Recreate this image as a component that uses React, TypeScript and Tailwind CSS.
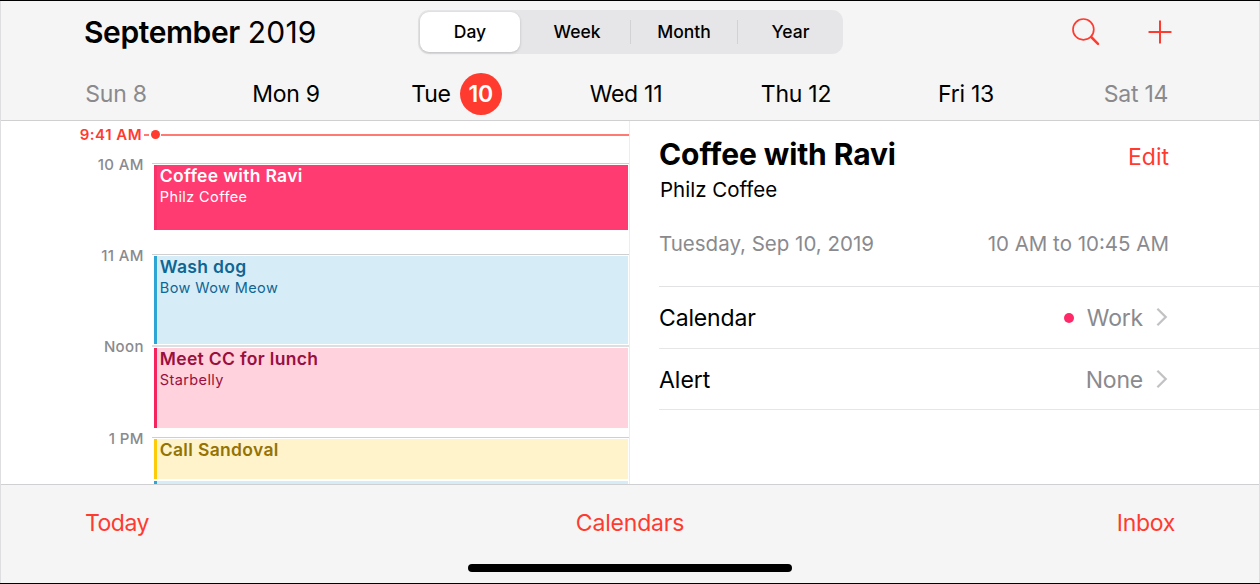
import React from "react";

type Tone = "selected" | "blue" | "pink" | "yellow";

const tones: Record<Tone, string> = {
  selected: "border-[#f8326a] bg-[#ff3b72] text-white",
  blue: "border-[#2fa5d6] bg-[#d6edf7] text-[#0f6593]",
  pink: "border-[#f5245f] bg-[#ffd2dd] text-[#990f3f]",
  yellow: "border-[#fdcb09] bg-[#fef3cb] text-[#947306]",
};

function EventBlock({ tone, title, place, className }: {
  tone: Tone; title?: string; place?: string; className: string;
}) {
  return (
    <div className={`ml-[2px] w-[474px] shrink-0 overflow-hidden border-l-[3px] pl-[3px] ${tones[tone]} ${className}`}>
      {title && <div className="text-[17.5px] leading-[21px] font-semibold tracking-[0.33px] whitespace-nowrap">{title}</div>}
      {place && <div className="text-[14.5px] leading-[21px] tracking-[0.4px] whitespace-nowrap">{place}</div>}
    </div>
  );
}

function Hour({ label, className, line = "border-t border-[#cfcfd1]", children }: {
  label: string; className: string; line?: string; children: React.ReactNode;
}) {
  return (
    <div className={`flex shrink-0 ${className}`}>
      <div className="-mt-[8px] h-5 w-[143px] text-right text-[15px] leading-5 font-medium tracking-[0.35px] text-[#8a8a8e]">{label}</div>
      <div className={`ml-[8px] flex w-[478px] flex-col ${line}`}>{children}</div>
    </div>
  );
}

function Chevron() {
  return (
    <svg width="12" height="20" viewBox="0 0 12 20" fill="none" stroke="#c2c2c5" strokeWidth="2.3" className="-mt-[3px] ml-[13px]">
      <path d="M1.4 1.8 9.7 10 1.4 18.2" />
    </svg>
  );
}

const days = [
  { text: "Sun 8", cls: "text-[#8a8a8e]" },
  { text: "Mon 9", cls: "text-black" },
  { text: "Tue", badge: "10", cls: "text-black" },
  { text: "Wed 11", cls: "text-black" },
  { text: "Thu 12", cls: "text-black" },
  { text: "Fri 13", cls: "text-black" },
  { text: "Sat 14", cls: "text-[#8a8a8e]" },
];

export default function App() {
  return (
    <div className="flex h-[584px] w-[1260px] flex-col overflow-hidden border-t border-b border-black bg-white font-['Inter','Liberation_Sans',sans-serif] text-black">
      <div className="flex min-h-0 flex-1 flex-col border-x border-[#dedee0]">
        <header className="flex h-[120px] shrink-0 flex-col border-b border-[#d0d0d2] bg-[#f5f5f5]">
          <div className="flex h-[64px] shrink-0 items-center pl-[83px]">
            <h1 className="-mt-[2px] w-[334px] text-[30px] leading-9 tracking-[-0.4px] whitespace-nowrap">
              <span className="font-semibold">September</span> <span className="tracking-[0.2px]">2019</span>
            </h1>
            <div className="-mt-[2px] flex h-[44px] w-[425px] items-center rounded-[11px] bg-[#e6e6e8] p-[2px] text-[17.5px] font-medium">
              <div className="flex h-10 w-[100px] items-center justify-center rounded-[9px] bg-white pt-px shadow-[0_1px_3px_rgba(0,0,0,0.18)]">Day</div>
              <div className="w-[110px] pt-px pl-1 text-center">Week</div>
              <div className="flex h-6 w-[108px] items-center justify-center border-x border-[#d2d2d5] pt-px">Month</div>
              <div className="w-[103px] pt-px pl-0.5 text-center">Year</div>
            </div>
            <svg width="32" height="32" viewBox="0 0 32 32" fill="none" stroke="#ff3b30" strokeLinecap="round" className="-mt-[3px] ml-[228px]">
              <circle cx="12.4" cy="13.4" r="10.4" strokeWidth="1.7" />
              <path d="m20.2 21 6.8 6.8" strokeWidth="2.5" />
            </svg>
            <svg width="24" height="24" viewBox="0 0 24 24" fill="none" stroke="#ff3b30" strokeLinecap="round" strokeWidth="2" className="-mt-[2px] ml-[45px]">
              <path d="M12 1.3v21.4M1.3 12h21.4" />
            </svg>
          </div>
          <div className="ml-[30px] grid h-[55px] w-[1190px] grid-cols-7 pt-[3px] text-[23px]">
            {days.map((d) => (
              <div key={d.text} className={`flex items-center justify-center tracking-[-0.25px] ${d.cls}`}>
                {d.text}
                {d.badge && (
                  <span className="-mr-px ml-[9px] flex size-[42px] shrink-0 items-center justify-center rounded-full bg-[#ff3b30] font-semibold text-white">{d.badge}</span>
                )}
              </div>
            ))}
          </div>
        </header>

        <main className="flex h-[363px] shrink-0">
          <section className="flex w-[629px] shrink-0 flex-col overflow-hidden border-r border-[#ededef]">
            <div className="flex h-[42px] w-[628px] shrink-0 items-start">
              <div className="flex h-[27px] items-center">
                <div className="w-[142px] pr-px text-right text-[15px] leading-5 font-semibold tracking-[0.5px] whitespace-nowrap text-[#ff3b30]">9:41 AM</div>
                <div className="ml-px h-[2px] w-[5px] bg-[#ff7a72]" />
                <div className="mx-[1.5px] size-[9px] rounded-full bg-[#ff3b30]" />
                <div className="h-[2px] w-[468px] bg-[#ff7a72]" />
              </div>
            </div>
            <Hour label="10 AM" className="h-[91px]">
              <EventBlock tone="selected" title="Coffee with Ravi" place="Philz Coffee" className="mt-px h-[65px]" />
            </Hour>
            <Hour label="11 AM" className="h-[91px]">
              <EventBlock tone="blue" title="Wash dog" place="Bow Wow Meow" className="mt-px h-[88px]" />
            </Hour>
            <Hour label="Noon" className="h-[92px]" line="border-t-2 border-[#dcdfe1]">
              <EventBlock tone="pink" title="Meet CC for lunch" place="Starbelly" className="mt-px h-[80px]" />
            </Hour>
            <Hour label="1 PM" className="h-[60px]">
              <EventBlock tone="yellow" title="Call Sandoval" className="mt-px h-[40px]" />
              <EventBlock tone="blue" className="mt-[2px] h-[16px]" />
            </Hour>
          </section>

          <section className="flex flex-1 flex-col pl-[29px]">
            <div className="flex h-[165px] shrink-0 flex-col pr-[90px]">
              <div className="mt-[14px] flex h-[38px] items-center justify-between">
                <h2 className="text-[30px] font-bold tracking-[-0.1px]">Coffee with Ravi</h2>
                <span className="mt-[6px] text-[23px] text-[#ff3b30]">Edit</span>
              </div>
              <div className="mt-[3px] pl-px text-[20.5px] leading-7">Philz Coffee</div>
              <div className="mt-[26px] flex justify-between text-[20.5px] leading-7 text-[#8a8a8e]">
                <span>Tuesday, Sep 10, 2019</span>
                <span>10 AM to 10:45 AM</span>
              </div>
            </div>
            <div className="flex h-[62px] items-center border-t border-[#e2e2e4] pt-[2px] pr-[91px] text-[23px]">
              <span className="flex-1 tracking-[-0.15px]">Calendar</span>
              <span className="-mt-px mr-[13px] size-[10px] rounded-full bg-[#ff2968]" />
              <span className="tracking-[-0.2px] text-[#8a8a8e]">Work</span>
              <Chevron />
            </div>
            <div className="flex h-[62px] items-center border-y border-[#e6e6e8] pt-[2px] pr-[91px] text-[23px]">
              <span className="flex-1">Alert</span>
              <span className="tracking-[-0.2px] text-[#8a8a8e]">None</span>
              <Chevron />
            </div>
          </section>
        </main>

        <footer className="flex flex-1 flex-col border-t border-[#d0d0d2] bg-[#f5f5f5]">
          <div className="grid h-[76px] grid-cols-3 items-center pt-px pr-[84px] pl-[84px] text-[23px] text-[#ff3b30]">
            <span className="tracking-[-0.5px]">Today</span>
            <span className="text-center tracking-[-0.2px]">Calendars</span>
            <span className="text-right tracking-[-0.3px]">Inbox</span>
          </div>
          <div className="mt-[3px] h-[8px] w-[324px] self-center rounded-full bg-black" />
        </footer>
      </div>
    </div>
  );
}
